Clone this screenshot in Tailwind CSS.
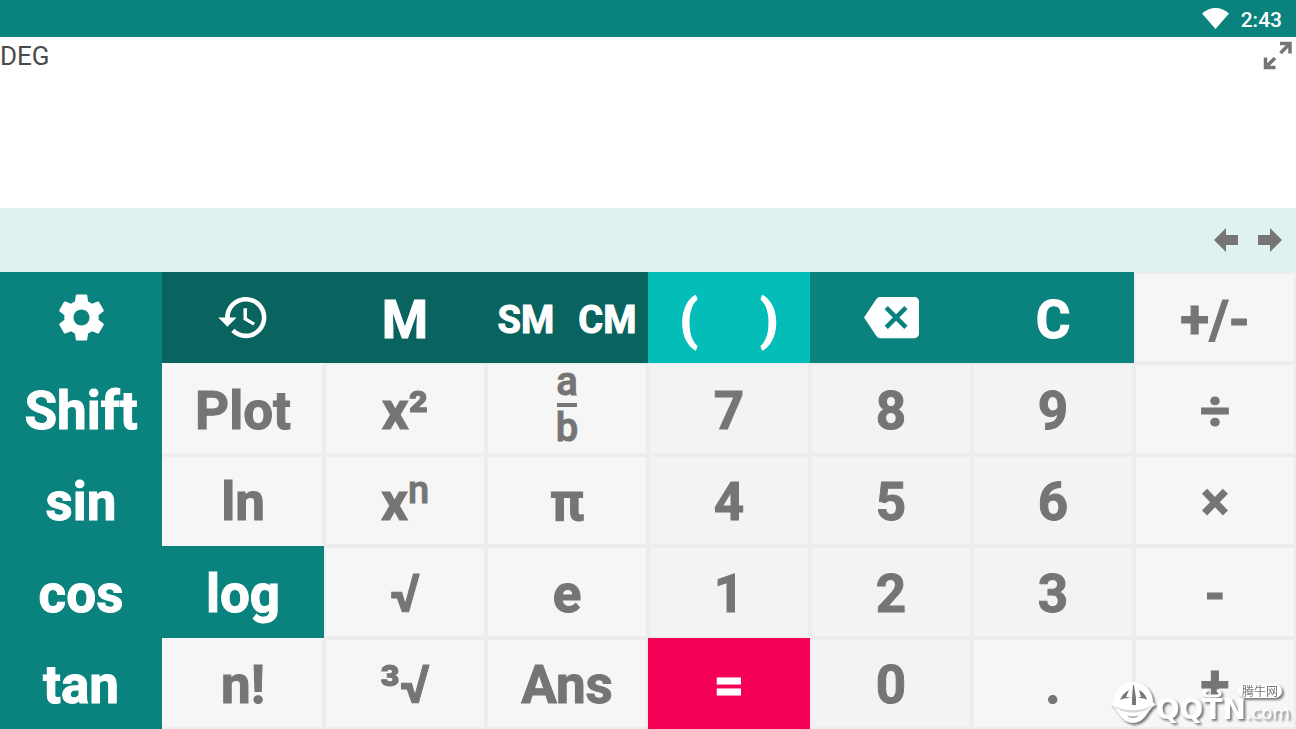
<!DOCTYPE html>
<html lang="en">
  <head>
    <meta charset="UTF-8" />
    <meta name="viewport" content="width=device-width, initial-scale=1.0" />
    <title>Scientific calculator</title>
    <script src="https://cdn.jsdelivr.net/npm/@tailwindcss/browser@4"></script>
  </head>
  <body class="relative flex min-h-screen flex-col bg-white font-[Roboto,sans-serif]">
    <!-- Status bar -->
    <header class="flex h-[37px] items-center justify-end gap-3 bg-[#0a827d] pr-[14px] text-white">
      <svg class="h-[21px] w-[27px]" viewBox="0 0 27 21" fill="currentColor">
        <path d="M0 5.500C4 2 8.500 0 13.500 0S23 2 27 5.500L13.500 21z" />
      </svg>
      <span class="pt-[2px] text-[21px] font-medium leading-6">2:43</span>
    </header>

    <!-- Display -->
    <main class="flex h-[171px] items-start justify-between pr-1">
      <span class="pt-1 text-[26px] leading-[30px] text-[#4a4a4a]">DEG</span>
      <button class="pt-1" aria-label="Expand">
        <svg class="h-[29px] w-[29px]" viewBox="0 0 29 29" fill="none" stroke="#757575" stroke-width="3.5">
          <path d="M17 2.500H27V12.500M27 2.500L17.500 12" />
          <path d="M2.500 16.500V26.500H12.500M2.500 26.500L12 17" />
        </svg>
      </button>
    </main>

    <!-- Cursor bar -->
    <nav class="flex h-16 items-center justify-end gap-5 bg-[#dff1f0] pr-[14px] text-[#757575]">
      <button aria-label="Cursor left">
        <svg class="h-6 w-6" viewBox="0 0 24 24" fill="currentColor"><path d="M0 12L12 0v7h12v10H12V24z" /></svg>
      </button>
      <button aria-label="Cursor right">
        <svg class="h-6 w-6" viewBox="0 0 24 24" fill="currentColor"><path d="M24 12L12 0v7H0v10h12V24z" /></svg>
      </button>
    </nav>

    <!-- Keypad -->
    <section class="grid flex-1 grid-cols-8 grid-rows-5 text-[53px] font-bold leading-[60px] text-[#757575] [-webkit-text-stroke:1px]">
      <button class="flex items-center justify-center bg-[#0a827d] text-white" aria-label="Settings">
        <svg class="h-[55px] w-[55px]" viewBox="0 0 24 24" fill="currentColor">
          <path d="M19.43 12.98c.04-.32.07-.64.07-.98s-.03-.66-.07-.98l2.110-1.650c.19-.15.24-.42.12-.64l-2-3.460c-.12-.22-.39-.3-.61-.22l-2.490 1c-.52-.4-1.080-.73-1.690-.98l-.38-2.650C14.460 2.180 14.250 2 14 2h-4c-.25 0-.46.18-.49.42l-.38 2.650c-.61.25-1.170.59-1.690.98l-2.490-1c-.23-.09-.49 0-.61.22l-2 3.460c-.13.22-.07.49.12.64l2.110 1.650c-.04.32-.07.65-.07.98s.03.66.07.98l-2.110 1.650c-.19.15-.24.42-.12.64l2 3.460c.12.22.39.3.61.22l2.490-1c.52.4 1.080.73 1.690.98l.38 2.650c.03.24.24.42.49.42h4c.25 0 .46-.18.49-.42l.38-2.650c.61-.25 1.170-.59 1.690-.98l2.490 1c.23.09.49 0 .61-.22l2-3.460c.12-.22.07-.49-.12-.64l-2.110-1.650zM12 15.500c-1.930 0-3.500-1.570-3.500-3.500s1.570-3.500 3.500-3.500 3.500 1.570 3.500 3.500-1.570 3.500-3.500 3.500z" />
        </svg>
      </button>
      <button class="flex items-center justify-center bg-[#09635f] text-white" aria-label="History">
        <svg class="h-[55px] w-[55px]" viewBox="0 0 24 24" fill="currentColor">
          <path d="M13 3c-4.970 0-9 4.030-9 9H1l3.890 3.890.07.14L9 12H6c0-3.870 3.130-7 7-7s7 3.130 7 7-3.130 7-7 7c-1.930 0-3.680-.79-4.940-2.060l-1.420 1.420C8.270 19.990 10.510 21 13 21c4.970 0 9-4.030 9-9s-4.030-9-9-9zm-1 5v5l4.280 2.540.72-1.210-3.500-2.080V8H12z" />
        </svg>
      </button>
      <button class="bg-[#09635f] pt-1 text-white">M</button>
      <div class="flex items-center justify-center gap-6 bg-[#09635f] pt-1 text-[38px] text-white">
        <button>SM</button>
        <button>CM</button>
      </div>
      <div class="flex items-center justify-center gap-[62px] bg-[#02bdb8] pt-1 text-white">
        <button>(</button>
        <button>)</button>
      </div>
      <button class="flex items-center justify-center bg-[#0a827d] text-white" aria-label="Backspace">
        <svg class="h-[55px] w-[55px]" viewBox="0 0 24 24" fill="currentColor">
          <path d="M22 3H7c-.69 0-1.230.35-1.590.88L0 12l5.410 8.110c.36.53.9.89 1.590.89h15c1.100 0 2-.9 2-2V5c0-1.100-.9-2-2-2zm-3 12.590L17.590 17 14 13.410 10.410 17 9 15.590 12.590 12 9 8.410 10.410 7 14 10.590 17.590 7 19 8.410 15.410 12 19 15.590z" />
        </svg>
      </button>
      <button class="bg-[#0a827d] pt-1 text-white">C</button>
      <button class="border-2 border-[#ededed] bg-[#f6f6f6] pt-1">+/-</button>

      <button class="bg-[#0a827d] pt-1 text-white">Shift</button>
      <button class="border-2 border-t-[#f6f6f6] border-r-[#ededed] border-b-[#ededed] border-l-[#f6f6f6] bg-[#f6f6f6] pt-1">Plot</button>
      <button class="border-2 border-[#ededed] bg-[#f6f6f6] pt-1">x²</button>
      <button class="flex flex-col items-center justify-center gap-[5px] border-2 border-[#ededed] bg-[#f6f6f6] pb-2 text-[40px] font-medium leading-8" aria-label="Fraction a over b">
        <span>a</span>
        <span class="h-1 w-5 bg-[#757575]"></span>
        <span>b</span>
      </button>
      <button class="border-2 border-[#ededed] bg-[#f3f3f3] pt-1">7</button>
      <button class="border-2 border-[#ededed] bg-[#f3f3f3] pt-1">8</button>
      <button class="border-2 border-[#ededed] bg-[#f3f3f3] pt-1">9</button>
      <button class="border-2 border-[#ededed] bg-[#f6f6f6] pt-1">÷</button>

      <button class="bg-[#0a827d] pt-1 text-white">sin</button>
      <button class="border-2 border-t-[#ededed] border-r-[#ededed] border-b-[#f6f6f6] border-l-[#f6f6f6] bg-[#f6f6f6] pt-1">ln</button>
      <button class="flex items-center justify-center border-2 border-[#ededed] bg-[#f6f6f6] pt-1">
        x<span class="pb-6 text-[38px] font-medium leading-9">n</span>
      </button>
      <button class="border-2 border-[#ededed] bg-[#f6f6f6] pt-1">π</button>
      <button class="border-2 border-[#ededed] bg-[#f3f3f3] pt-1">4</button>
      <button class="border-2 border-[#ededed] bg-[#f3f3f3] pt-1">5</button>
      <button class="border-2 border-[#ededed] bg-[#f3f3f3] pt-1">6</button>
      <button class="border-2 border-[#ededed] bg-[#f6f6f6] pt-1">×</button>

      <button class="bg-[#0a827d] pt-1 text-white">cos</button>
      <button class="bg-[#0a827d] pt-1 text-white">log</button>
      <button class="border-2 border-[#ededed] bg-[#f6f6f6] pt-1">√</button>
      <button class="border-2 border-[#ededed] bg-[#f6f6f6] pt-1">e</button>
      <button class="border-2 border-[#ededed] bg-[#f3f3f3] pt-1">1</button>
      <button class="border-2 border-[#ededed] bg-[#f3f3f3] pt-1">2</button>
      <button class="border-2 border-[#ededed] bg-[#f3f3f3] pt-1">3</button>
      <button class="border-2 border-[#ededed] bg-[#f6f6f6] pt-1">-</button>

      <button class="bg-[#0a827d] pt-1 text-white">tan</button>
      <button class="border-2 border-t-[#f6f6f6] border-r-[#ededed] border-b-[#ededed] border-l-[#f6f6f6] bg-[#f6f6f6] pt-1">n!</button>
      <button class="border-2 border-[#ededed] bg-[#f6f6f6] pt-1">³√</button>
      <button class="border-2 border-[#ededed] bg-[#f6f6f6] pt-1">Ans</button>
      <button class="bg-[#f50057] pt-1 text-white">=</button>
      <button class="border-2 border-[#ededed] bg-[#f3f3f3] pt-1">0</button>
      <button class="border-2 border-[#ededed] bg-[#f6f6f6] pt-1">.</button>
      <button class="border-2 border-[#ededed] bg-[#f6f6f6] pt-1">+</button>
    </section>

    <!-- Site watermark -->
    <div class="pointer-events-none absolute right-[6px] bottom-1 flex items-end text-white drop-shadow-[2px_2px_1px_#777777]">
      <svg class="h-[44px] w-[48px]" viewBox="0 0 48 44">
        <path d="M6 21C6 9 14 1 25 1s20 8 20 20l3 3c-4 1-6 5-9 9-3 5-8 9-14 9s-11-4-14-9c-3-4-5-8-9-10z" fill="white" />
        <path d="M25 4h1l2 13v7h-4v-7zM12 19c2-5 5-8 9-10l-3 7 6 1c-4 0-8 0-12 2zM31 9c4 2 7 5 8 10-3-2-6-2-10-2l4-1z" fill="#777777" />
        <path d="M5 24c10 7 29 7 40 0-9 10-31 10-40 0z" fill="#d5d5d5" />
        <path d="M19 34c4 2 8 2 12 0-2 4-10 4-12 0z" fill="#a0a0a0" />
      </svg>
      <div class="flex flex-col">
        <div class="flex items-end justify-end gap-4 pr-2">
          <svg class="h-[10px] w-[20px]" viewBox="0 0 20 10" fill="none" stroke="white" stroke-width="3">
            <path d="M5 2C0 5 2 8 6 8h8c4 0 6-3 1-6" />
          </svg>
          <span class="rounded-full bg-white px-1 font-['Noto_Sans_CJK_SC',sans-serif] text-[12px] leading-[14px] text-[#777777]">腾牛网</span>
        </div>
        <div class="flex items-baseline font-['DejaVu_Sans',sans-serif] leading-6">
          <span class="text-[28px] font-bold leading-6">QQTN</span>
          <span class="text-[18px] leading-6">.com</span>
        </div>
      </div>
    </div>
  </body>
</html>
